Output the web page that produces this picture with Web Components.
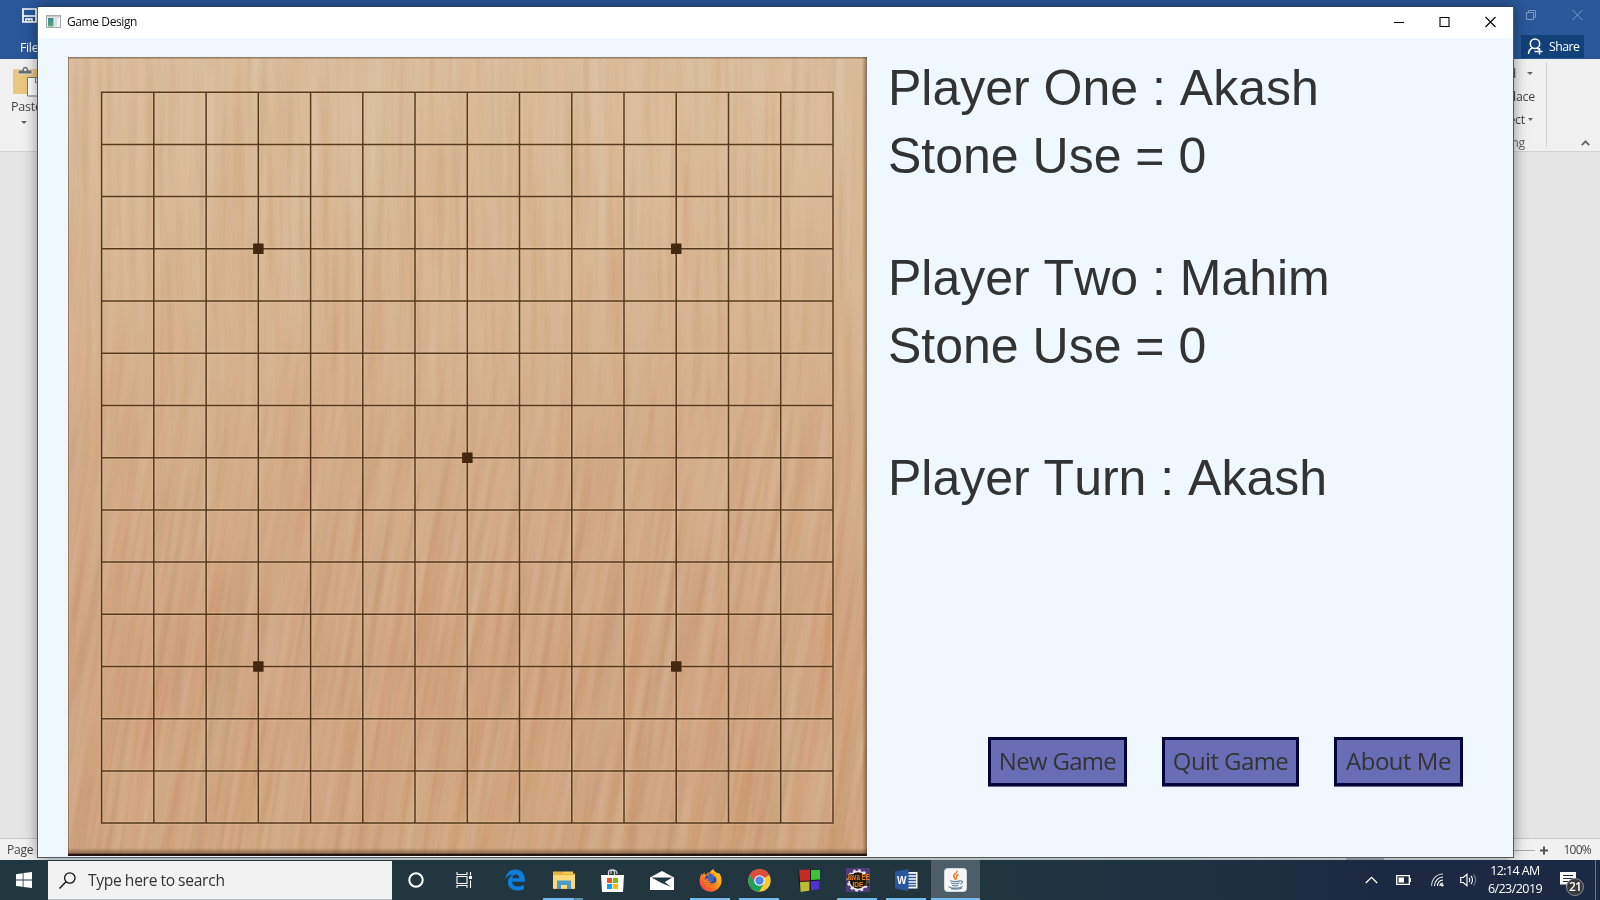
<!DOCTYPE html>
<html lang="en">
<head>
<meta charset="utf-8">
<title>Game Design</title>
<style>
html,body{margin:0;width:1600px;height:900px;overflow:hidden;background:#e5e5e5}
</style>
</head>
<body>
<desk-top></desk-top>
<script>
const define = (name, css, html) => {
  const t = document.createElement('template');
  t.innerHTML = `<style>*{box-sizing:border-box}svg{display:block;overflow:visible}${css}</style>${html}`;
  customElements.define(name, class extends HTMLElement {
    constructor() {
      super();
      this.attachShadow({mode: 'open'}).append(t.content.cloneNode(true));
    }
  });
};

/* ---- document window in the background ---- */
define('word-title', `
:host{display:flex;justify-content:space-between;height:59px;background:#2a579a;color:#fff;font:13px "Open Sans","Noto Sans",sans-serif}
.l{padding:8px 0 0 22px}
.file{margin:16px 0 0 -2px;font-size:12.3px;line-height:17px;letter-spacing:-.3px}
.r{width:112px}
.ctl{display:flex;gap:36px;padding:9px 0 0 38px;height:35px}
.share{display:flex;align-items:center;gap:5px;width:63px;height:23px;margin-left:33px;background:#124078;padding-left:6px;font-size:12.3px;letter-spacing:-.55px}
.share span{padding-bottom:1px}
`, `
<div class="l">
 <svg width="15" height="15" viewBox="0 0 15 15"><path d="M1 1h13v13H1z" fill="none" stroke="#fff" stroke-width="1.700"/><path d="M1 8h13" stroke="#fff" stroke-width="1.600"/><path d="M4 14v-3h6v3M7 11v3" fill="none" stroke="#fff" stroke-width="1.400"/></svg>
 <div class="file">File</div>
</div>
<div class="r">
 <div class="ctl">
  <svg width="10" height="12" viewBox="0 0 10 12" fill="none" stroke="#7f9bc5"><path d="M.5 3.500h7v7h-7zM2.500 3.500V1.500h7v7H7.500"/></svg>
  <svg width="11" height="12" viewBox="0 0 11 12" stroke="#7f9bc5"><path d="M.5 1l10 10M10.500 1l-10 10"/></svg>
 </div>
 <div class="share"><svg width="17" height="17" viewBox="0 0 17 17" fill="none" stroke="#fff" stroke-width="1.500"><circle cx="8" cy="5.700" r="4.700"/><path d="M1.500 16c0-3 1.500-5 4-6M10 10l2 1.500M7.500 13.500h8M12.500 10v6.500"/></svg><span>Share</span></div>
</div>`);

define('word-ribbon', `
:host{display:flex;justify-content:space-between;height:93px;background:#f1f1f1;border-bottom:1px solid #d2d2d2;color:#444;font:12.3px/17px "Open Sans","Noto Sans",sans-serif;letter-spacing:-.2px}
.p{padding:7px 0 0 11px;width:60px}
.p svg{margin-left:2px}.p div{margin-top:1px;font-size:12.5px}
.p .d{margin:6px 0 0 10px}
.e{width:140px;display:flex}
.c{width:87px;border-right:1px solid #d0d0d0;margin:3px 0 4px;display:grid;grid-template-rows:23px 23px 23px 23px;justify-content:end;text-align:right}
.c span{display:flex;align-items:center;justify-content:flex-end}
.x{padding:81px 0 0 34px}
`, `
<div class="p">
 <svg width="30" height="31" viewBox="0 0 30 31"><rect y="3" width="26" height="25" rx="1.500" fill="#eac77e"/><path d="M5 4h4a3.300 3.600 0 0 1 6.600 0H19v4H5z" fill="#707070" stroke="#f1f1f1" stroke-width=".8"/><circle cx="12.300" cy="3.800" r="1.300" fill="#fff"/><path d="M14.500 11.500h16V30h-16z" fill="#fff" stroke="#777"/><path d="M22.500 11.500v5h6" fill="none" stroke="#777"/></svg>
 <div>Paste</div>
 <svg class="d" width="6" height="3"><path d="M0 0h6L3 3z" fill="#666"/></svg>
</div>
<div class="e"><div class="c">
 <span style="width:79px;padding-right:30px;justify-self:end">Find<svg width="6" height="3" style="margin:0 -17px 0 11px"><path d="M0 0h6L3 3z" fill="#666"/></svg></span>
 <span style="padding-right:11px">Replace</span>
 <span style="padding-right:13px">Select<svg width="5" height="3" style="margin-left:3px"><path d="M0 0h5L2.500 3z" fill="#666"/></svg></span>
 <span style="padding-right:21px;color:#666">Editing</span>
</div><div class="x"><svg width="9" height="6"><path d="M.8 5.200L4.500 1.300l3.700 3.900" fill="none" stroke="#666" stroke-width="1.800"/></svg></div></div>`);

define('word-status', `
:host{display:flex;justify-content:space-between;align-items:center;height:22px;background:#f1f1f1;border-top:1px solid #c8c8c8;color:#444;font:12px "Open Sans","Noto Sans",sans-serif;padding:0 9px 0 7px;letter-spacing:-.25px}
div{display:flex;align-items:center}
.pc{letter-spacing:-.75px}
`, `<span>Page 1</span><div><svg width="70" height="10" style="margin-right:10px"><path d="M0 5.500h52" stroke="#aaa"/><path d="M57 5.500h8M61 1.500v8" stroke="#555" stroke-width="2"/></svg><span class="pc">100%</span></div>`);

define('word-window', `
:host{display:flex;flex-direction:column;height:860px;background:#e5e5e5}
.page{flex:1}
`, `<word-title></word-title><word-ribbon></word-ribbon><div class="page"></div><word-status></word-status>`);

/* ---- game window ---- */
define('title-bar', `
:host{display:flex;align-items:center;height:31px;background:#fff;color:#111;font:12px "Open Sans","Noto Sans",sans-serif;padding:0 17px 1px 8px}
span{margin-left:6px;letter-spacing:-.4px;flex:1;position:relative;top:-1px}
.b{display:flex;gap:35px;margin-top:-2px}
`, `
<svg width="15" height="13" viewBox="0 0 15 13" style="margin-top:-2px"><rect x=".5" y=".5" width="14" height="12" fill="#f4f4f4" stroke="#aaa"/><rect x="1" y="1" width="13" height="1.500" fill="#ccc"/><defs><linearGradient id="g" x2="0" y2="1"><stop stop-color="#3d8b90"/><stop offset="1" stop-color="#5aa878"/></linearGradient></defs><rect x="2" y="3" width="5.500" height="8.500" fill="url(#g)"/><rect x="8.500" y="3" width="2.500" height="8.500" fill="#d4dde0"/></svg>
<span><slot></slot></span>
<div class="b">
<svg width="10" height="11"><path d="M0 6.500h10" stroke="#000"/></svg>
<svg width="11" height="11"><path d="M1 1.500h9v9h-9z" fill="none" stroke="#000" stroke-width="1.100"/></svg>
<svg width="11" height="11"><path d="M.5 1l10 10M10.500 1l-10 10" stroke="#000" stroke-width="1.100"/></svg>
</div>`);

let lines = '', dots = '';
for (let i = 0; i < 15; i++) {
  const x = 33.6 + i * 52.24, y = 35.2 + i * 52.21;
  lines += `M${x.toFixed(1)} 34.500V766.700M33 ${y.toFixed(1)}H765.500`;
}
for (const [c, r] of [[3,3],[11,3],[7,7],[3,11],[11,11]])
  dots += `<rect x="${(33.6+c*52.24-5.2).toFixed(1)}" y="${(35.2+r*52.21-5.2).toFixed(1)}" width="10.500" height="10.500" rx=".6"/>`;

define('go-board', `
:host{display:block;width:799px;height:799px;overflow:hidden}
`, `
<svg width="799" height="799" viewBox="0 0 799 799" style="overflow:hidden">
<defs>
 <filter id="fine" x="0" y="0" width="100%" height="100%" color-interpolation-filters="sRGB"><feTurbulence type="fractalNoise" baseFrequency=".13 .006" numOctaves="3" seed="4"/><feColorMatrix values="1.1 0 0 0 -.05  .9 .2 0 0 -.05  .9 0 .2 0 -.05  0 0 0 0 1"/></filter>
 <filter id="wide" x="0" y="0" width="100%" height="100%" color-interpolation-filters="sRGB"><feTurbulence type="fractalNoise" baseFrequency=".05 .004" numOctaves="2" seed="9"/><feColorMatrix values=".7 0 0 0 .15  0 .9 0 0 .05  0 1 0 0 0  0 0 0 0 1"/></filter>
 <linearGradient id="base" x2="0" y2="1"><stop stop-color="#dabc9c"/><stop offset=".25" stop-color="#d7b592"/><stop offset=".5" stop-color="#d3ac88"/><stop offset=".75" stop-color="#d0a582"/><stop offset="1" stop-color="#d0a680"/></linearGradient>
 <linearGradient id="fade" x2="0" y2="1"><stop offset=".28" stop-color="#000"/><stop offset=".6" stop-color="#fff"/></linearGradient>
 <linearGradient id="fadeUp" x2="0" y2="1"><stop offset=".28" stop-color="#fff"/><stop offset=".6" stop-color="#000"/></linearGradient>
 <mask id="low"><rect width="799" height="799" fill="url(#fade)"/></mask>
 <mask id="high"><rect width="799" height="799" fill="url(#fadeUp)"/></mask>
 <linearGradient id="foot" x2="0" y2="1"><stop stop-color="#30180a" stop-opacity="0"/><stop offset=".65" stop-color="#4a3020" stop-opacity=".45"/><stop offset=".75" stop-color="#20100a" stop-opacity=".95"/><stop offset="1" stop-color="#20100a"/></linearGradient>
 <linearGradient id="side"><stop stop-color="#4a3020" stop-opacity="0"/><stop offset="1" stop-color="#4a3020" stop-opacity=".55"/></linearGradient>
</defs>
<rect width="799" height="799" fill="url(#base)"/>
<g mask="url(#high)" style="mix-blend-mode:soft-light"><rect width="799" height="799" filter="url(#fine)" opacity=".28"/></g>
<g mask="url(#high)" style="mix-blend-mode:soft-light"><rect width="799" height="799" filter="url(#wide)" opacity=".16"/></g>
<g mask="url(#low)" style="mix-blend-mode:soft-light"><g transform="skewX(-9)"><rect width="960" height="799" filter="url(#fine)" opacity=".3"/></g></g>
<g mask="url(#low)" style="mix-blend-mode:soft-light"><g transform="skewX(-9)"><rect width="960" height="799" filter="url(#wide)" opacity=".2"/></g></g>
<path d="${lines}" fill="none" stroke="#e9c9a5" stroke-opacity=".3" stroke-width="4"/>
<path d="${lines}" fill="none" stroke="#4c2f14" stroke-opacity=".93" stroke-width="1.500"/>
<g fill="#44270f">${dots}</g>
<path d="M0 .7h799" stroke="#80684f" stroke-width="1.600" opacity=".75"/><path d="M.5 0v799" stroke="#80684f" opacity=".7"/>
<rect x="794" width="5" height="799" fill="url(#side)"/>
<rect y="791" width="799" height="8" fill="url(#foot)"/>
</svg>`);

define('player-panel', `
:host{display:block;color:#333;font:50px/68px "Liberation Sans",Arial,sans-serif;font-kerning:none;white-space:nowrap}
:host(.second){margin-top:54px}:host(.turn){margin-top:64px}
`, `<slot></slot>`);

define('game-button', `
:host{display:flex;align-items:center;justify-content:center;height:49px;border:3px solid #02043a;background:#686db5;color:#333;font:24px/44px "Open Sans","Noto Sans",sans-serif;box-shadow:0 1px 0 #6c6a94;white-space:nowrap;padding-bottom:1px}
`, `<slot></slot>`);

define('game-window', `
:host{display:block;border:1px solid #55585c;border-top-color:#26406c;background:#eff7ff;box-shadow:0 0 13px rgba(0,0,0,.42);overflow:hidden}
.body{display:flex;padding:19px 0 0 30px;height:820px}
.info{display:flex;flex-direction:column;margin-top:-3px;padding-left:21px;width:640px}
.btns{display:flex;gap:35px;margin:225px 0 0 100px}
`, `
<title-bar>Game Design</title-bar>
<div class="body">
 <go-board></go-board>
 <div class="info">
  <player-panel><div>Player One : Akash</div><div>Stone Use = 0</div></player-panel>
  <player-panel class="second"><div>Player Two : Mahim</div><div>Stone Use = 0</div></player-panel>
  <player-panel class="turn">Player Turn : Akash</player-panel>
  <div class="btns"><game-button style="width:139px;letter-spacing:-.7px">New Game</game-button><game-button style="width:137px;letter-spacing:-.6px">Quit Game</game-button><game-button style="width:129px;letter-spacing:-.5px">About Me</game-button></div>
 </div>
</div>`);

/* ---- taskbar ---- */
define('task-item', `
:host{position:relative;display:flex;align-items:center;justify-content:center;width:49px;height:40px;flex:none}
:host([open])::after{content:"";position:absolute;left:4px;right:5px;bottom:0;height:2px;background:#76b9ed}
:host([active]){background:#4d5e69}
:host([active])::after{left:0;right:0}
:host([stack])::after{left:4px;right:5px;background:linear-gradient(90deg,#76b9ed 31px,#3f6179 31px,#3f6179 32px,#5b8db4 32px)}
`, `<slot></slot>`);

define('search-box', `
:host{display:flex;align-items:center;width:344px;height:39px;margin-top:1px;background:#f2f2f2;border-bottom:1px solid #b8bcbe;color:#333;font:15.6px "Open Sans","Noto Sans",sans-serif;padding-left:11px;flex:none}
span{margin-left:12px;letter-spacing:-.81px;word-spacing:1px}
span{font-size:16px}
`, `<svg width="17" height="17" viewBox="0 0 17 17" fill="none" stroke="#111" stroke-width="1.300"><circle cx="10.800" cy="6" r="5.200"/><path d="M7 9.700L.5 16.500"/></svg><span style="font-size:15.6px;letter-spacing:-.75px;letter-spacing:-.77px;letter-spacing:-.78px;letter-spacing:-.28px;word-spacing:-.5px">Type here to search</span>`);

define('system-tray', `
:host{display:flex;align-items:center;margin-left:auto;height:40px;color:#fff;font:12.5px/18px "Open Sans","Noto Sans",sans-serif}
.clock{text-align:center;width:60px;margin-left:8px;white-space:nowrap;display:flex;flex-direction:column;align-items:center}
.n{position:relative;margin-left:14px;width:36px;height:40px}
.badge{position:absolute;left:7px;top:18px;width:18px;height:18px;border-radius:50%;background:#39393c;border:1px solid #8b8f98;font-weight:600;font-size:12px;line-height:15px;text-align:center;letter-spacing:-.8px}
.edge{width:5px;height:40px;border-left:1px solid #6b7688}
`, `
<svg width="13" height="8" style="margin-right:18px"><path d="M.8 7L6.500 1.300 12.200 7" fill="none" stroke="#fff" stroke-width="1.300"/></svg>
<svg width="16" height="10" style="margin-right:19px"><path d="M.7.700h12.600v8.600H.7z" fill="none" stroke="#fff" stroke-width="1.300"/><path d="M2.500 2.500H8v5H2.500zM13.500 3h1.500v4h-1.500z" fill="#fff"/></svg>
<svg width="13" height="14" viewBox="0 0 13 14" style="margin-right:16px" fill="none" stroke="#fff" stroke-width="1.100"><path d="M.6 13C.6 6 5.500 1 12 1" opacity=".8"/><path d="M3.500 13c0-5 4-9 8.500-9M6.500 13c0-3 2-6 5.500-6M9 13c0-1.500 1-3 3-3"/><circle cx="11.300" cy="12.300" r="1.200" fill="#fff" stroke="none"/></svg>
<svg width="17" height="14" viewBox="0 0 17 14" fill="none" stroke="#fff" stroke-width="1.100"><path d="M.7 4.500h2.600L7 1.300v11.400L3.300 9.500H.7z"/><path d="M9 5c1 1 1 3 0 4M11 3c2 2 2 6 0 8"/><path d="M13.500 1.500c3 3 3 8 0 11" opacity=".4"/></svg>
<div class="clock"><span style="letter-spacing:-.6px">12:14 AM</span><span style="letter-spacing:-.55px">6/23/2019</span></div>
<div class="n"><svg width="17" height="17" viewBox="0 0 17 17" style="margin:12px 0 0 1px"><path d="M0 0h16v12.500H9L6 16v-3.500H0z" fill="#fff"/><path d="M3 3.500h10M3 6.500h10M3 9.500h7" stroke="#1c2a45" stroke-width="1.100"/></svg><div class="badge">21</div></div>
<div class="edge"></div>`);

define('task-bar', `
:host{display:flex;height:40px;background:linear-gradient(90deg,#21373f 0,#21353f 62%,#1e3040 78%,#1b2942 86%,#1b2944 100%)}
text{font-family:"Liberation Sans",sans-serif;font-weight:700}
`, `
<task-item style="width:48px"><svg width="16" height="16" viewBox="0 0 16 16" fill="#fff"><path d="M0 2.200L6.700 1.200V7.600H0zM7.500 1.100L16 0V7.600H7.500zM0 8.400H6.700V14.800L0 13.900zM7.500 8.400H16V16L7.500 14.900z"/></svg></task-item>
<search-box></search-box>
<task-item style="width:48px"><svg width="16" height="16"><circle cx="8" cy="8" r="6.700" fill="none" stroke="#fff" stroke-width="2"/></svg></task-item>
<task-item style="width:50px;padding-right:2px"><svg width="17" height="16" viewBox="0 0 17 16" fill="none" stroke="#fff" stroke-width="1.100"><path d="M1 4.500h10v7H1zM1 0v2.500h10V0M1 16v-2.500h10V16M14.500 0v3.500M14.500 8.500V16"/><path d="M13 4h3v3h-3z" fill="#fff" stroke="none"/></svg></task-item>
<task-item><svg width="20" height="22" viewBox="0 0 20 22"><path d="M.2 10C1 4 5 .5 10.300.5 16 .5 19.800 4.700 19.800 10v2.700H7c.2 3.300 3 4.700 6 4.700 2.300 0 4.200-.6 5.900-1.600V20c-1.800 1-4.200 1.500-6.800 1.500C6.500 21.500 2.900 18 2.900 13.500c0-3.300 1.800-6.200 5-7.700C4.600 5.700 1.900 7.300.2 10zM7.200 9.200h7c0-2.300-1.200-3.600-3.300-3.600-2.200 0-3.400 1.600-3.700 3.600z" fill="#0b7fdb"/></svg></task-item>
<task-item open stack><svg width="22" height="18" viewBox="0 0 22 18"><path d="M0 .5h9l1.500 2H22V18H0z" fill="#e9b33b"/><path d="M0 4h22v13.500H0z" fill="#fbda78"/><path d="M9.500.5H20V3H9.500z" fill="#f4c95a"/><path d="M4 9.500h14V18h-4v-4H8v4H4z" fill="#4b9ac7"/></svg></task-item>
<task-item><svg width="23" height="23" viewBox="0 0 23 23"><path d="M7.500 6V3.500c0-3.500 6-3.500 6 0V6M10 5V3c0-3 6-3 6 2" fill="none" stroke="#ddd" stroke-width="1.200"/><path d="M0 6h23l-1 17H1z" fill="#fff"/><path d="M6 9h5v5H6z" fill="#f25022"/><path d="M12 9h5v5h-5z" fill="#7fba00"/><path d="M6 15h5v5H6z" fill="#00a4ef"/><path d="M12 15h5v5h-5z" fill="#ffb900"/></svg></task-item>
<task-item><svg width="24" height="19" viewBox="0 0 24 19"><path d="M0 6.500L12 0l12 6.500V19H0z" fill="#fff"/><path d="M1.500 6.500h20.800L14.800 11l5.700 4.800L11.500 12z" fill="#21363f"/></svg></task-item>
<task-item open><svg width="23" height="23" viewBox="0 0 23 23"><defs><linearGradient id="ff" x1="1" y1="0" x2="0" y2="1"><stop stop-color="#ffe22e"/><stop offset=".45" stop-color="#ff980e"/><stop offset="1" stop-color="#f5245a"/></linearGradient></defs><path d="M20.500 4.500c1.200 1.800 2 4 2 7A11 11 0 0 1 .5 12C.5 9 1.500 6 3 4.200l.3 2L5.500 3v2.300C7.500 5 9 6 10 7c1-4 1-5 4.500-7 .3 3.300 5 4.500 6 4.500z" fill="url(#ff)"/><circle cx="11.500" cy="11" r="6" fill="#264bb6"/><path d="M8 4c5-1.500 8 1.500 9.500 5-1.500-1-2.500-1-3-.8 0 3-2 5-4 4.800 1 1.800 4 1.800 6 0-1 6-10 7-11.500 1-.6-3 .5-4.500 3-4.500 2 0 3-.5 2-1.500C9 7.200 7.500 6.500 8 4z" fill="#ff7b18" opacity=".92"/><path d="M9 5c3-1 5 0 6 3l-1.500 3-2 1.500-3.500-1 2.500-2.500z" fill="#2d67ce"/></svg></task-item>
<task-item open><svg width="23" height="23" viewBox="0 0 23 23"><circle cx="11.500" cy="11.500" r="11.200" fill="#fcc934"/><path d="M11.500 11.500L1.900 5.700A11.200 11.200 0 0 1 21.300 6z" fill="#dd4b3e"/><path d="M11.500 6h9.800C18.700 1.500 14 .3 11.500.3 7 .3 3.500 2.600 1.900 5.700l4.700 8.400z" fill="#dd4b3e"/><path d="M1.900 5.700A11.200 11.200 0 0 0 11 22.700l5-8.300-9-.5z" fill="#1fa15d"/><circle cx="11.500" cy="11.500" r="5.300" fill="#fff"/><circle cx="11.500" cy="11.500" r="4.200" fill="#4a86ee"/></svg></task-item>
<task-item><svg width="22" height="23" viewBox="0 0 22 23"><path d="M0 1.500L11 .5l11 1-.5 18L11.500 22 2 23z" fill="#111818"/><path d="M1 1l11-.5v11L2 12z" fill="#c42a26"/><path d="M13 1h9v9.500l-9 .5z" fill="#3cc238"/><path d="M2 13l9.500-.5v9.200L2.500 23z" fill="#c0bc31"/><path d="M12.500 12.300l9-.8V20l-8.500 1.500z" fill="#5132ca"/></svg></task-item>
<task-item open><svg width="24" height="24" viewBox="0 0 24 24"><rect width="24" height="24" fill="#4f3c79"/><circle cx="12" cy="12.500" r="9" fill="#21180f" stroke="#eee" stroke-width="1.500"/><circle cx="12" cy="12.500" r="10" fill="none" stroke="#e7e4e8" stroke-width="2.400" stroke-dasharray="2.600 2.630"/><path d="M1 6h22v12H6l-2-5H1z" fill="#21180f" opacity=".75"/><text x="12" y="11.800" font-size="8.200" textLength="23.500" lengthAdjust="spacingAndGlyphs" text-anchor="middle" fill="#e98222">Java EE</text><text x="12" y="18.500" font-size="8" text-anchor="middle" textLength="11" lengthAdjust="spacingAndGlyphs" fill="#e98222">IDE</text></svg></task-item>
<task-item open><svg width="23" height="22" viewBox="0 0 23 22"><path d="M12 3h10.500v16.500H12z" fill="#fff"/><path d="M13 5.500h8M13 8.500h8M13 11.500h8M13 14.500h8M13 17h8" stroke="#2b579a" stroke-width="1.300"/><path d="M0 2.500L13.500 0v22L0 19.500z" fill="#2b579a"/><text x="6.700" y="15" font-size="10" text-anchor="middle" fill="#fff">W</text></svg></task-item>
<task-item open active><svg width="23" height="24" viewBox="0 0 23 24"><rect x=".5" y=".5" width="22" height="23" rx="3" fill="#f7f7f7" stroke="#d4d8da"/><path d="M13 2.500c1 3-5 4-3 6.500 1 1.500 1.500 1.500 1 3M14.500 6.500c-4 2-1.500 3-2 5" fill="none" stroke="#e67d31" stroke-width="1.400"/><path d="M6 12.800c3 1.200 8 .9 10-.1M16 13c3-.8 3.500 2 .5 3M7 15c3 1 6 1 8.500 0M8 17.200c2 .8 4 .8 6.500 0M4.500 18.500c2 2.200 11.500 2 14-.2M7 20.800c4 .7 8 .5 11-.8" fill="none" stroke="#607d95" stroke-width="1.100"/></svg></task-item>
<system-tray></system-tray>`);

define('desk-top', `
:host{display:block;position:relative;width:1600px;height:900px;overflow:hidden}
game-window{position:absolute;left:37px;top:6px;width:1477px;height:852px}
.gap{position:absolute;left:48px;top:858px;width:1460px;height:2px;background:linear-gradient(90deg,#b9bdbe 1298px,#8d9194 1298px,#8d9194 1336px,#b9bdbe 1336px)}
task-bar{position:absolute;left:0;top:860px;width:1600px}
`, `<word-window></word-window><game-window></game-window><div class="gap"></div><task-bar></task-bar>`);
</script>
</body>
</html>
